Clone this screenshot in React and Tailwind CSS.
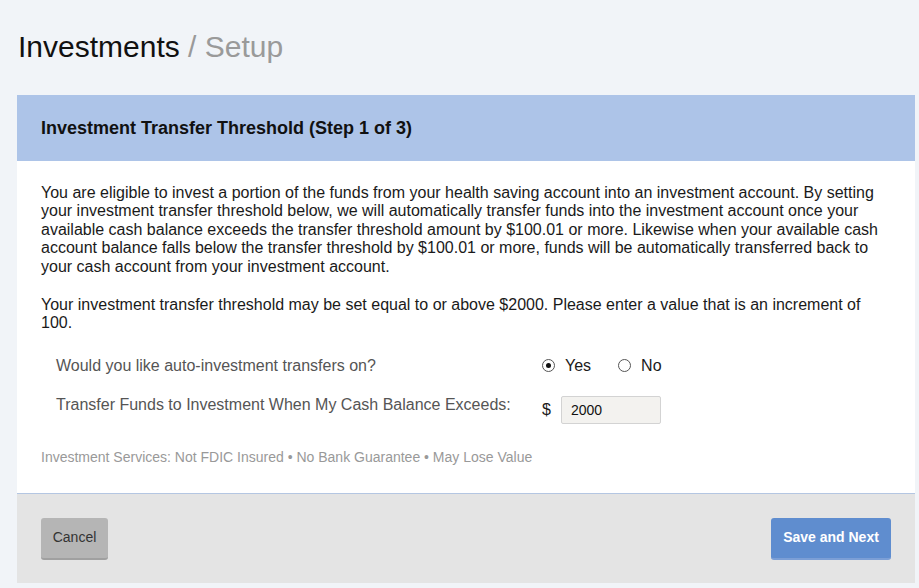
import React, { useState } from 'react';

const Radio = ({ checked, label, onClick }) => (
  <label onClick={onClick} className="flex items-center cursor-pointer">
    <span className="w-[13px] h-[13px] rounded-full border border-[#555] bg-white flex items-center justify-center">
      {checked && <span className="w-[5px] h-[5px] rounded-full bg-[#111]" />}
    </span>
    <span className="ml-[10px] text-[16px] text-[#1a1a1a]">{label}</span>
  </label>
);

const App = () => {
  const [auto, setAuto] = useState(true);
  const [amount, setAmount] = useState('2000');

  return (
    <div className="min-h-[588px] bg-[#f1f4f8] pt-[32px] font-['Liberation_Sans',Arial,sans-serif]">
      <h1 className="ml-[18px] text-[30px] leading-[30px] text-[#111]">
        Investments <span className="text-[#9a9a9a]">/ Setup</span>
      </h1>

      <div className="ml-[17px] mt-[33px] w-[898px] bg-white">
        <div className="h-[66px] bg-[#adc4e8] flex items-center px-6">
          <h2 className="text-[18px] font-bold text-[#111]">
            Investment Transfer Threshold (Step 1 of 3)
          </h2>
        </div>

        <div className="px-6 pt-[23px] pb-[27px]">
          <p className="text-[16px] leading-[18.4px] text-[#1a1a1a]">
            You are eligible to invest a portion of the funds from your health saving account into an investment account. By setting your investment transfer threshold below, we will automatically transfer funds into the investment account once your available cash balance exceeds the transfer threshold amount by $100.01 or more. Likewise when your available cash account balance falls below the transfer threshold by $100.01 or more, funds will be automatically transferred back to your cash account from your investment account.
          </p>
          <p className="mt-[20px] text-[16px] leading-[18.4px] text-[#1a1a1a]">
            Your investment transfer threshold may be set equal to or above $2000. Please enter a value that is an increment of 100.
          </p>

          <div className="mt-[19px] pl-[15px] flex items-center h-[28px]">
            <span className="w-[486px] text-[16px] text-[#555]">Would you like auto-investment transfers on?</span>
            <Radio checked={auto} label="Yes" onClick={() => setAuto(true)} />
            <div className="ml-[27px]">
              <Radio checked={!auto} label="No" onClick={() => setAuto(false)} />
            </div>
          </div>

          <div className="mt-[16px] pl-[15px] flex items-start">
            <span className="w-[486px] text-[16px] leading-[18px] text-[#555]">
              Transfer Funds to Investment When My Cash Balance Exceeds:
            </span>
            <div className="flex items-center">
              <span className="w-[19px] text-[16px] text-[#1a1a1a]">$</span>
              <input
                type="text"
                value={amount}
                onChange={(e) => setAmount(e.target.value)}
                className="w-[100px] h-[28px] px-[9px] text-[14px] text-[#111] bg-[#f3f2ef] border border-[#d3d3d3] rounded-[2px] focus:outline-none"
              />
            </div>
          </div>

          <p className="mt-[24px] text-[14px] leading-[18px] text-[#999]">
            Investment Services: Not FDIC Insured • No Bank Guarantee • May Lose Value
          </p>
        </div>

        <div className="h-[90px] bg-[#e4e4e4] border-t border-[#b4c6e2] px-6 pt-[24px] flex justify-between items-start">
          <button className="w-[67px] h-[42px] bg-[#b5b5b5] border-b-2 border-[#a0a0a0] rounded-[3px] text-[14px] text-[#333]">
            Cancel
          </button>
          <button className="w-[120px] h-[42px] bg-[#5f8dcf] border-b-2 border-[#7c9fd6] rounded-[3px] text-[14px] font-bold text-white">
            Save and Next
          </button>
        </div>
      </div>
    </div>
  );
};

export default App;
